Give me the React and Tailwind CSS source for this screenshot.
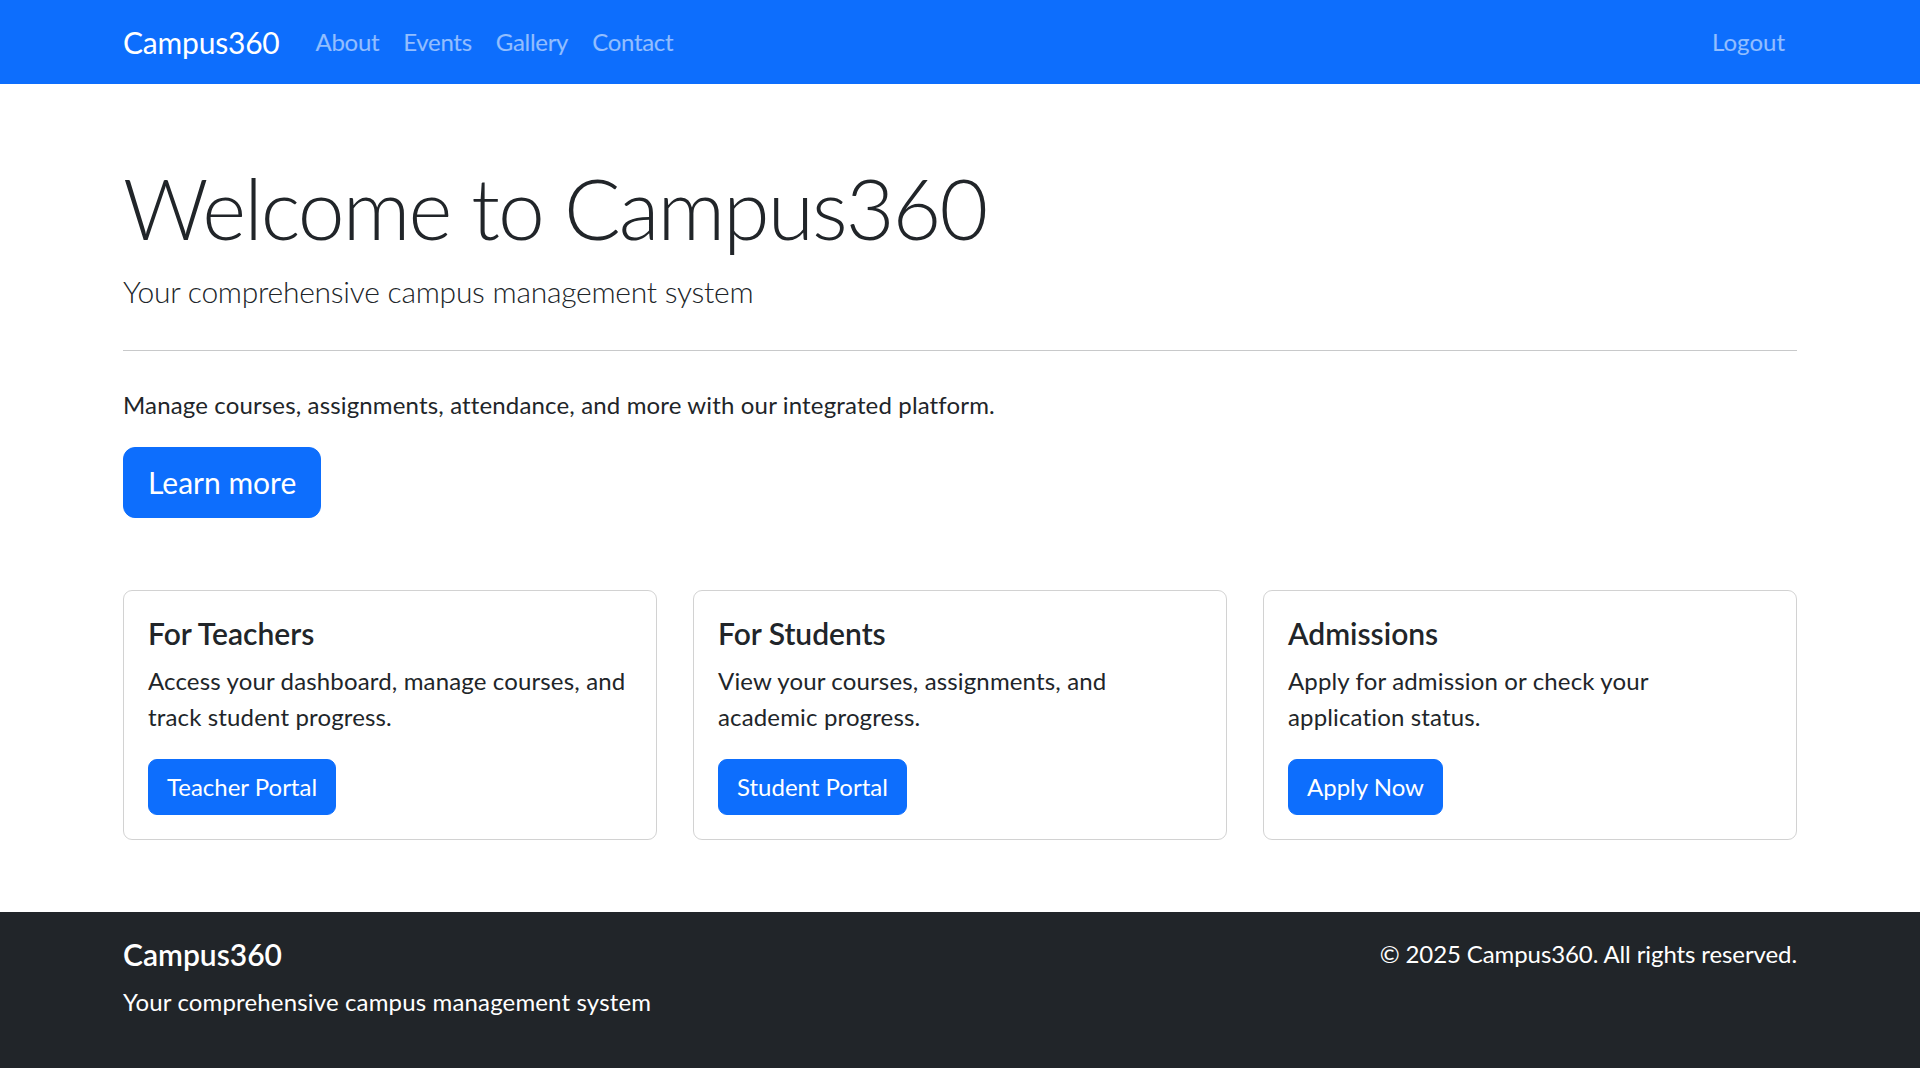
import React from 'react';

const navLinks = ["About", "Events", "Gallery", "Contact"];

const cards = [
  {
    title: "For Teachers",
    lines: ["Access your dashboard, manage courses, and", "track student progress."],
    button: "Teacher Portal",
  },
  {
    title: "For Students",
    lines: ["View your courses, assignments, and", "academic progress."],
    button: "Student Portal",
  },
  {
    title: "Admissions",
    lines: ["Apply for admission or check your", "application status."],
    button: "Apply Now",
  },
];

const App = () => {
  return (
    <div className="min-h-screen flex flex-col bg-white text-[#212529] font-[family-name:Lato,'Liberation_Sans',sans-serif]">
      {/* Navbar */}
      <nav className="bg-[#0d6efd] h-[84px] shrink-0">
        <div className="mx-auto w-[1710px] px-[18px] h-full flex items-center">
          <a className="text-white text-[30px] leading-[45px] tracking-[-0.2px] mr-[24px] cursor-pointer">Campus360</a>
          <div className="flex items-center">
            {navLinks.map((link) => (
              <a key={link} className="px-[12px] text-[24px] leading-[36px] tracking-[-0.3px] text-white/55 cursor-pointer">
                {link}
              </a>
            ))}
          </div>
          <a className="ml-auto px-[12px] text-[24px] leading-[36px] text-white/55 cursor-pointer">Logout</a>
        </div>
      </nav>

      {/* Main */}
      <main className="mx-auto w-[1710px] px-[18px] pt-[74px]">
        <h1 className="text-[84px] font-light leading-[1.2] tracking-[-1.9px] mb-[10px]">Welcome to Campus360</h1>
        <p className="text-[30px] font-light leading-[45px] tracking-[-0.25px]">Your comprehensive campus management system</p>
        <hr className="my-[36px] border-t-[1.5px] border-[#c8c9ca]" />
        <p className="text-[24px] leading-[36px] tracking-[0.15px] mb-[24px]">
          Manage courses, assignments, attendance, and more with our integrated platform.
        </p>
        <button className="bg-[#0d6efd] border-[1.5px] border-[#0d6efd] text-white text-[30px] leading-[45px] px-[24px] py-[12px] rounded-[12px]">
          Learn more
        </button>

        {/* Cards */}
        <div className="mt-[72px] grid grid-cols-3 gap-[36px]">
          {cards.map((card) => (
            <div key={card.title} className="border-[1.5px] border-black/[0.175] rounded-[9px] p-[24px]">
              <h5 className="text-[30px] font-semibold leading-[36px] mb-[12px]">{card.title}</h5>
              <p className="text-[24px] leading-[36px] tracking-[0.15px] mb-[24px]">
                {card.lines[0]}
                <br />
                {card.lines[1]}
              </p>
              <button className="bg-[#0d6efd] border-[1.5px] border-[#0d6efd] text-white text-[24px] leading-[36px] px-[18px] py-[9px] rounded-[9px]">
                {card.button}
              </button>
            </div>
          ))}
        </div>
      </main>

      {/* Footer */}
      <footer className="mt-[72px] flex-1 bg-[#212529] text-white py-[24px]">
        <div className="mx-auto w-[1710px] px-[18px] flex justify-between">
          <div>
            <h5 className="text-[30px] font-semibold leading-[36px] mb-[12px]">Campus360</h5>
            <p className="text-[24px] leading-[36px] tracking-[0.15px] mb-[24px]">Your comprehensive campus management system</p>
          </div>
          <p className="text-[24px] leading-[36px] tracking-[-0.1px]">© 2025 Campus360. All rights reserved.</p>
        </div>
      </footer>
    </div>
  );
};

export default App;
